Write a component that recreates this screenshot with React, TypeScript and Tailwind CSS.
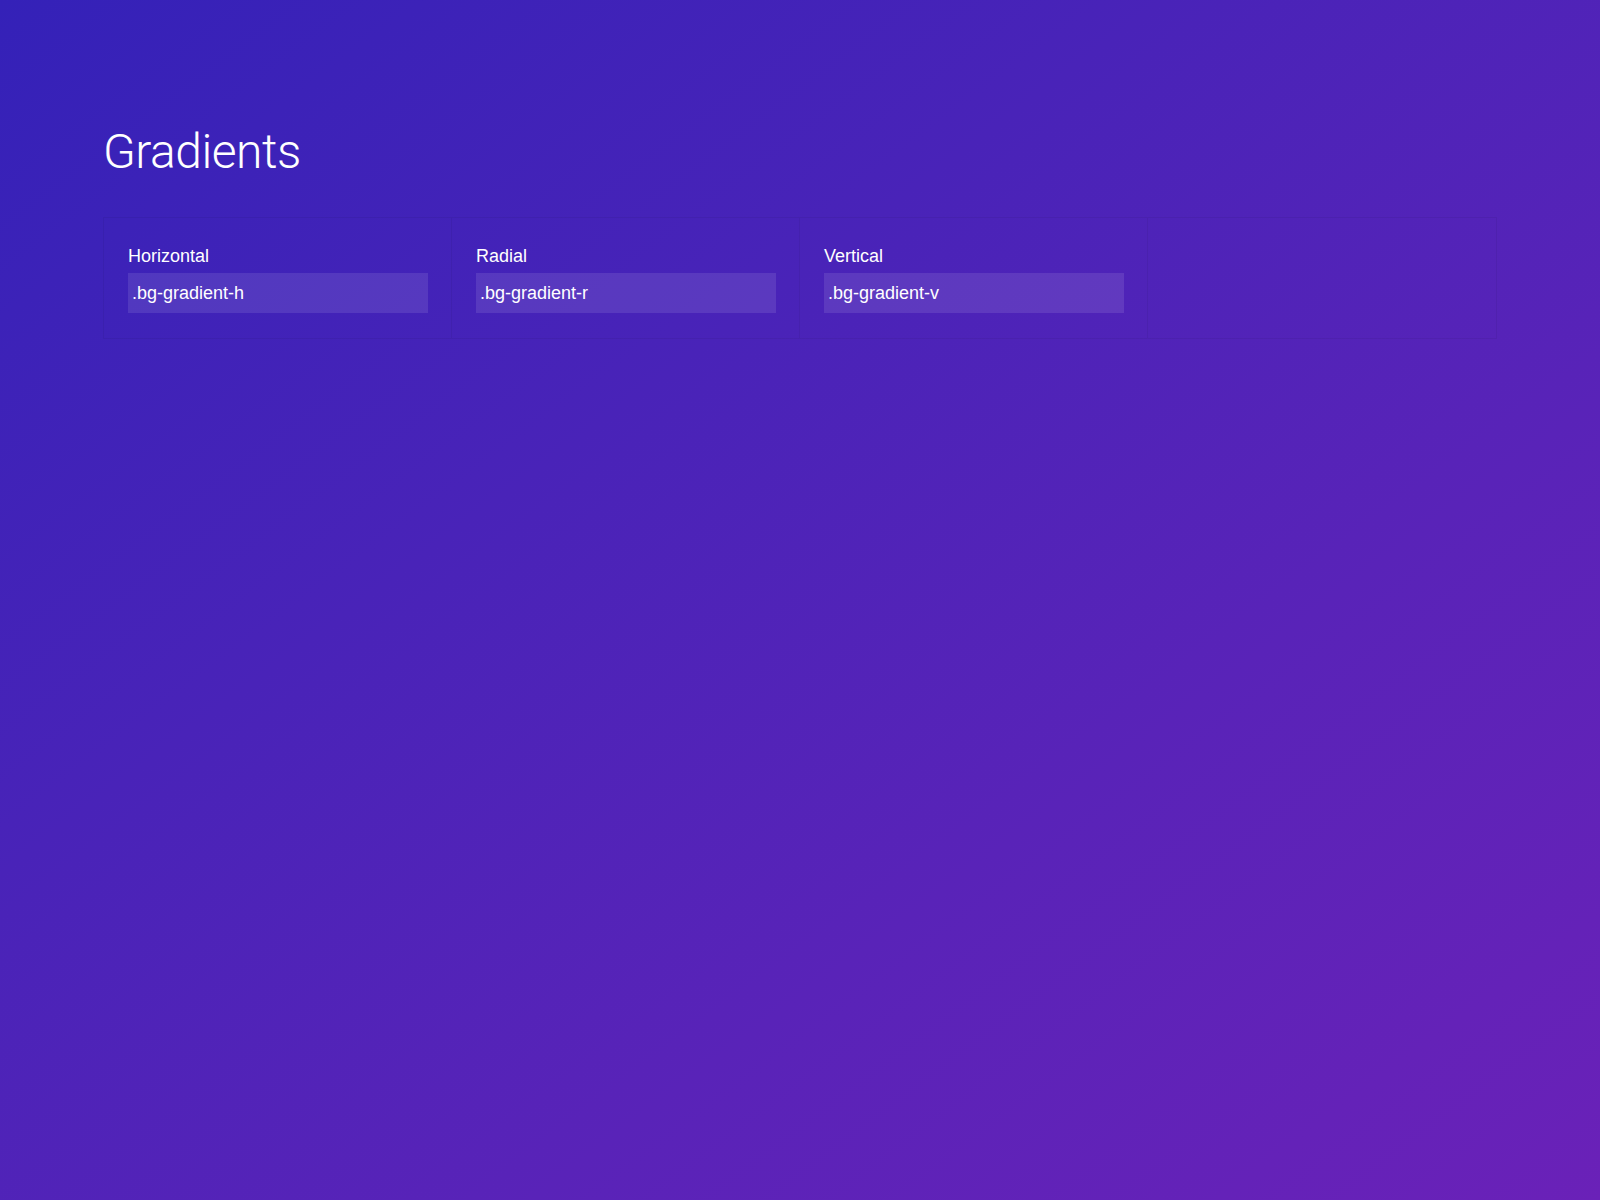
import React from "react";

const swatches = [
  { label: "Horizontal", cls: ".bg-gradient-h" },
  { label: "Radial", cls: ".bg-gradient-r" },
  { label: "Vertical", cls: ".bg-gradient-v" },
];

export default function App() {
  return (
    <main className="min-h-screen w-full bg-gradient-to-br from-[#3421b8] to-[#6a21b8] px-[103px] pt-[122px] text-white">
      <h1 className="font-['Roboto',sans-serif] text-[48px] font-light leading-[60px] tracking-[-0.5px]">
        Gradients
      </h1>

      <div className="mt-[35px] grid grid-cols-4 border border-black/5">
        {swatches.map((s) => (
          <div
            key={s.label}
            className="border-r border-black/5 px-6 pt-[25px] pb-[25px] font-['Liberation_Sans',Arial,sans-serif]"
          >
            <div className="text-[18px] leading-[27px]">{s.label}</div>
            <div className="mt-[3px] flex h-10 w-[300px] items-center bg-white/10 px-[4px] text-[18px]">
              {s.cls}
            </div>
          </div>
        ))}
      </div>
    </main>
  );
}
